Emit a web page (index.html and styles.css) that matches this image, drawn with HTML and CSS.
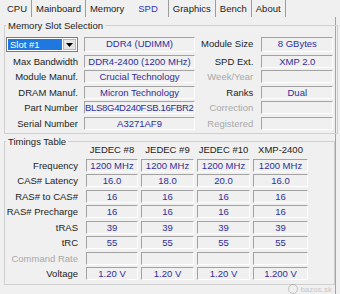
FILE: index.html
```html
<!DOCTYPE html>
<html lang="en">
<head>
<meta charset="UTF-8">
<meta name="viewport" content="width=device-width, initial-scale=1.0">
<title>SPD</title>
<link rel="stylesheet" href="styles.css">
</head>
<body>

<div class="tabs">
  <span class="tab">CPU</span>
  <span class="tab">Mainboard</span>
  <span class="tab prev">Memory</span>
  <span class="tab active">SPD</span>
  <span class="tab">Graphics</span>
  <span class="tab">Bench</span>
  <span class="tab">About</span>
</div>

<div class="panel">
  <fieldset class="group slot-group">
    <legend>Memory Slot Selection</legend>
    <div class="slot-grid">
      <div class="combo">
        <span class="combo-value">Slot #1</span>
        <span class="combo-btn">
          <svg width="7" height="4" viewBox="0 0 7 4"><path d="M0 0h7L3.5 4z" fill="#000"/></svg>
        </span>
      </div>
      <div class="field">DDR4 (UDIMM)</div>
      <div class="label right">Module Size</div>
      <div class="field">8 GBytes</div>

      <div class="label">Max Bandwidth</div>
      <div class="field">DDR4-2400 (1200 MHz)</div>
      <div class="label right">SPD Ext.</div>
      <div class="field">XMP 2.0</div>

      <div class="label">Module Manuf.</div>
      <div class="field">Crucial Technology</div>
      <div class="label right dim">Week/Year</div>
      <div class="field"></div>

      <div class="label">DRAM Manuf.</div>
      <div class="field">Micron Technology</div>
      <div class="label right">Ranks</div>
      <div class="field">Dual</div>

      <div class="label">Part Number</div>
      <div class="field tight">BLS8G4D240FSB.16FBR2</div>
      <div class="label right dim">Correction</div>
      <div class="field"></div>

      <div class="label">Serial Number</div>
      <div class="field">A3271AF9</div>
      <div class="label right dim">Registered</div>
      <div class="field"></div>
    </div>
  </fieldset>

  <fieldset class="group timings-group">
    <legend>Timings Table</legend>
    <div class="timings-grid">
      <div></div>
      <div class="head">JEDEC #8</div>
      <div class="head">JEDEC #9</div>
      <div class="head">JEDEC #10</div>
      <div class="head">XMP-2400</div>

      <div class="label">Frequency</div>
      <div class="field">1200 MHz</div>
      <div class="field">1200 MHz</div>
      <div class="field">1200 MHz</div>
      <div class="field">1200 MHz</div>

      <div class="label">CAS# Latency</div>
      <div class="field">16.0</div>
      <div class="field">18.0</div>
      <div class="field">20.0</div>
      <div class="field">16.0</div>

      <div class="label">RAS# to CAS#</div>
      <div class="field">16</div>
      <div class="field">16</div>
      <div class="field">16</div>
      <div class="field">16</div>

      <div class="label">RAS# Precharge</div>
      <div class="field">16</div>
      <div class="field">16</div>
      <div class="field">16</div>
      <div class="field">16</div>

      <div class="label">tRAS</div>
      <div class="field">39</div>
      <div class="field">39</div>
      <div class="field">39</div>
      <div class="field">39</div>

      <div class="label">tRC</div>
      <div class="field">55</div>
      <div class="field">55</div>
      <div class="field">55</div>
      <div class="field">55</div>

      <div class="label dim">Command Rate</div>
      <div class="field"></div>
      <div class="field"></div>
      <div class="field"></div>
      <div class="field"></div>

      <div class="label">Voltage</div>
      <div class="field">1.20 V</div>
      <div class="field">1.20 V</div>
      <div class="field">1.20 V</div>
      <div class="field">1.200 V</div>
    </div>
  </fieldset>

  <!-- watermark from the photo -->
  <div class="watermark"><span class="wm-logo"></span>bazos.sk</div>
</div>

</body>
</html>
```

FILE: styles.css
```css
body {
  margin: 0;
  width: 340px;
  height: 294px;
  overflow: hidden;
  background-color: #f0f0f0;
  color: #1c1c1c;
  font-family: "Liberation Sans", Arial, sans-serif;
  font-size: 9.5px;
}

/* tab strip */
.tabs {
  display: flex;
  height: 17px;
  padding-left: 3px;
}

.tab {
  padding: 2px 4px 0;
  line-height: 13px;
  border-right: 1px solid #9c9c9c;
}

.tab.prev {
  border-right: none;
}

.tab.active {
  padding: 2px 10px 0;
  color: #3434c8;
}

.panel {
  position: relative;
  width: 336px;
  height: 277px;
  padding-top: 2px;
  box-sizing: border-box;
  border-right: 1px solid #a4a4a4;
}

/* group boxes */
.group {
  width: 331px;
  margin: 0 0 0 4px;
  box-sizing: border-box;
  border: 1px solid #d0d0d0;
}

.group legend {
  padding: 0 2px;
  line-height: 13px;
}

.slot-group {
  padding: 5px 4px 3px 1px;
}

.timings-group {
  margin-top: 1.5px;
  padding: 0 4px 4px 1px;
}

.slot-grid {
  display: grid;
  grid-template-columns: 72px 111px 1fr 72px;
  grid-template-rows: 15px repeat(5, 13px);
  column-gap: 6px;
  row-gap: 2.5px;
}

.timings-grid {
  display: grid;
  grid-template-columns: 77px 52px 53px 53px 55px;
  grid-template-rows: 12px repeat(8, 13px);
  column-gap: 3px;
  row-gap: 2.5px;
  margin-top: -4px;
}

.label {
  text-align: right;
  line-height: 13px;
  white-space: nowrap;
}

.label.right {
  padding-right: 2px;
}

.timings-grid .label {
  padding-right: 5px;
}

.label.dim {
  color: #a8a8a8;
}

.head {
  text-align: center;
  line-height: 12px;
  white-space: nowrap;
}

.field {
  border: 1px solid;
  border-color: #a2a2a2 #ffffff #ffffff #a2a2a2;
  color: #2e2e9e;
  text-align: center;
  line-height: 11px;
  white-space: nowrap;
  overflow: hidden;
}

.field.tight {
  letter-spacing: -0.3px;
  text-align: left;
}

/* slot combo box */
.combo {
  display: flex;
  padding: 1px;
  border: 1px solid #7a7a7a;
  background-color: #ffffff;
}

.combo-value {
  flex: 1;
  padding-left: 2px;
  line-height: 11px;
  background-color: #1f78e0;
  color: #ffffff;
}

.combo-btn {
  display: flex;
  align-items: center;
  justify-content: center;
  width: 13px;
  margin-left: 1px;
  background-color: #e4e4e4;
  border: 1px solid #b8b8b8;
  box-sizing: border-box;
}

.watermark {
  position: absolute;
  right: 3px;
  bottom: 0;
  display: flex;
  align-items: center;
  gap: 2px;
  color: rgba(110, 110, 110, 0.35);
  font-size: 8px;
}

.wm-logo {
  width: 8px;
  height: 8px;
  border-radius: 50%;
  border: 1px solid rgba(110, 110, 110, 0.35);
}
```
